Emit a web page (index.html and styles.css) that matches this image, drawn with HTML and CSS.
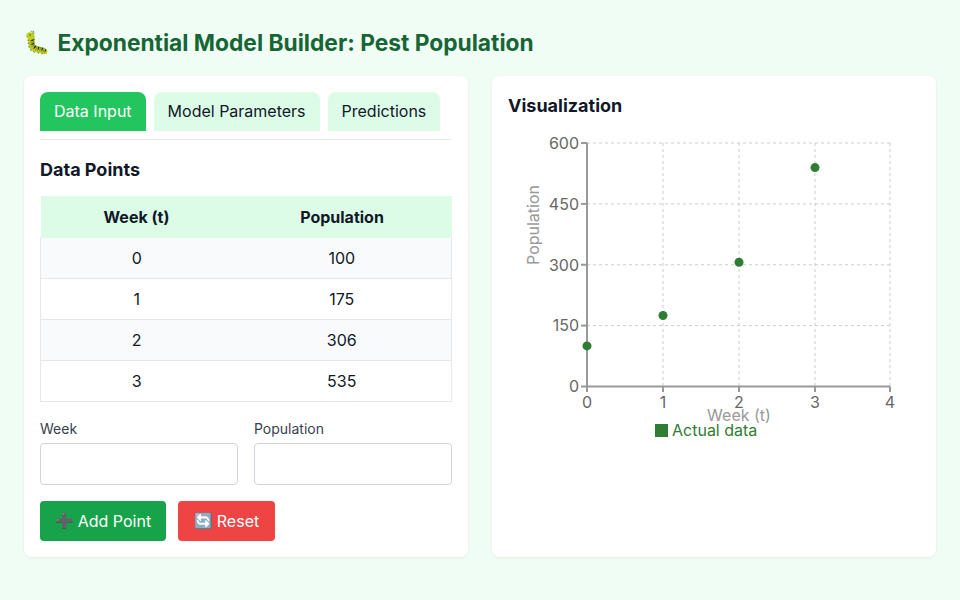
FILE: index.html
```html
<!DOCTYPE html>
<html lang="en">
<head>
<meta charset="utf-8">
<title>Exponential Model Builder</title>
<link rel="stylesheet" href="styles.css">
</head>
<body>
<div class="page">
  <h1 class="title"><span class="emoji">🐛</span> Exponential Model Builder: Pest Population</h1>
  <div class="columns">
    <section class="card">
      <div class="tabs">
        <button class="tab active">Data Input</button>
        <button class="tab">Model Parameters</button>
        <button class="tab">Predictions</button>
      </div>
      <h2 class="section-title">Data Points</h2>
      <table class="data">
        <thead>
          <tr><th class="c1">Week (t)</th><th>Population</th></tr>
        </thead>
        <tbody>
          <tr><td>0</td><td>100</td></tr>
          <tr><td>1</td><td>175</td></tr>
          <tr><td>2</td><td>306</td></tr>
          <tr><td>3</td><td>535</td></tr>
        </tbody>
      </table>
      <div class="fields">
        <label class="field"><span class="label">Week</span><input class="input" type="text"></label>
        <label class="field"><span class="label">Population</span><input class="input" type="text"></label>
      </div>
      <div class="actions">
        <button class="btn btn-add"><span class="emoji">➕</span> Add Point</button>
        <button class="btn btn-reset"><span class="emoji">🔄</span> Reset</button>
      </div>
    </section>
    <section class="card">
      <h2 class="viz-title">Visualization</h2>
      <svg class="chart" width="412" height="320" viewBox="0 0 412 320">
        <g class="grid">
          <line x1="79" y1="18" x2="382" y2="18"/>
          <line x1="79" y1="78.9" x2="382" y2="78.9"/>
          <line x1="79" y1="139.75" x2="382" y2="139.75"/>
          <line x1="79" y1="200.6" x2="382" y2="200.6"/>
          <line x1="155" y1="18" x2="155" y2="261.5"/>
          <line x1="231" y1="18" x2="231" y2="261.5"/>
          <line x1="307" y1="18" x2="307" y2="261.5"/>
          <line x1="382" y1="18" x2="382" y2="261.5"/>
        </g>
        <g class="axis">
          <line x1="79" y1="18" x2="79" y2="261.5"/>
          <line x1="79" y1="261.5" x2="382" y2="261.5"/>
          <line x1="73" y1="18" x2="79" y2="18"/>
          <line x1="73" y1="78.9" x2="79" y2="78.9"/>
          <line x1="73" y1="139.75" x2="79" y2="139.75"/>
          <line x1="73" y1="200.6" x2="79" y2="200.6"/>
          <line x1="73" y1="261.5" x2="79" y2="261.5"/>
          <line x1="79" y1="261.5" x2="79" y2="267"/>
          <line x1="155" y1="261.5" x2="155" y2="267"/>
          <line x1="231" y1="261.5" x2="231" y2="267"/>
          <line x1="307" y1="261.5" x2="307" y2="267"/>
          <line x1="382" y1="261.5" x2="382" y2="267"/>
        </g>
        <g class="ytick">
          <text x="71" y="18" dy="0.36em">600</text>
          <text x="71" y="78.9" dy="0.36em">450</text>
          <text x="71" y="139.75" dy="0.36em">300</text>
          <text x="71" y="200.6" dy="0.36em">150</text>
          <text x="71" y="261.5" dy="0.36em">0</text>
        </g>
        <g class="xtick">
          <text x="79" y="283">0</text>
          <text x="155" y="283">1</text>
          <text x="231" y="283">2</text>
          <text x="307" y="283">3</text>
          <text x="382" y="283">4</text>
        </g>
        <text class="axis-label" x="231" y="296" text-anchor="middle">Week (t)</text>
        <text class="axis-label" transform="translate(31 100) rotate(-90)" text-anchor="middle">Population</text>
        <g class="points">
          <circle cx="79" cy="220.9" r="4.5"/>
          <circle cx="155" cy="190.5" r="4.5"/>
          <circle cx="231" cy="137.3" r="4.5"/>
          <circle cx="307" cy="42.6" r="4.5"/>
        </g>
        <rect class="legend-swatch" x="147" y="299" width="13" height="13"/>
        <text class="legend-text" x="164" y="311">Actual data</text>
      </svg>
    </section>
  </div>
</div>
</body>
</html>
```

FILE: styles.css
```css
* { box-sizing: border-box; }
html, body { margin: 0; padding: 0; }
body {
  background: #f0fdf4;
  font-family: Inter, "Noto Sans", "Noto Color Emoji", sans-serif;
  color: #111827;
  width: 960px;
  height: 600px;
  overflow: hidden;
}
.emoji { font-family: "Noto Color Emoji", "Apple Color Emoji", "Segoe UI Emoji", sans-serif; }
.page { padding: 24px; }
.title {
  margin: 5px 0 19px;
  font-size: 22.75px;
  line-height: 28px;
  font-weight: 700;
  color: #166534;
  display: flex;
  align-items: center;
  gap: 7px;
  white-space: nowrap;
}
.title .emoji { font-size: 22px; margin-left: -1px; }
.columns {
  display: grid;
  grid-template-columns: 444px 444px;
  gap: 24px;
}
.card {
  background: #fff;
  border-radius: 8px;
  padding: 16px;
  box-shadow: 0 1px 3px rgba(0, 0, 0, 0.06);
  height: 481px;
  min-width: 0;
}
.tabs {
  display: flex;
  gap: 8px;
  padding-bottom: 8px;
  border-bottom: 1px solid #e5e7eb;
}
.tab {
  flex: none;
  white-space: nowrap;
  font-family: inherit;
  font-size: 16px;
  line-height: 19px;
  padding: 10px 14px;
  border: 0;
  border-radius: 8px 8px 0 0;
  background: #dcfce7;
  color: #111827;
}
.tab.active { background: #22c55e; color: #fff; }
.section-title {
  margin: 19px 0 15px;
  font-size: 18px;
  line-height: 22px;
  font-weight: 700;
}
.data {
  width: 412px;
  border-collapse: collapse;
  font-size: 16px;
}
.data th, .data td {
  border-top: 1px solid #e5e7eb;
  border-bottom: 1px solid #e5e7eb;
  padding: 10px;
  line-height: 20px;
  text-align: center;
}
.data td:first-child { border-left: 1px solid #e5e7eb; }
.data td:last-child { border-right: 1px solid #e5e7eb; }
.data th { background: #dcfce7; font-weight: 700; border-color: #dcfce7; }
.data .c1 { width: 192px; }
.data tbody tr:nth-child(odd) td { background: #f9fafb; }
.fields {
  display: grid;
  grid-template-columns: minmax(0, 1fr) minmax(0, 1fr);
  gap: 16px;
  margin-top: 18px;
}
.field { display: flex; flex-direction: column; gap: 6px; min-width: 0; }
.label { font-size: 14px; line-height: 17px; color: #374151; }
.input {
  width: 100%;
  min-width: 0;
  height: 42px;
  border: 1px solid #d1d5db;
  border-radius: 4px;
  font-family: inherit;
  font-size: 16px;
  padding: 8px;
}
.actions { display: flex; gap: 12px; margin-top: 16px; }
.btn {
  font-family: inherit;
  font-size: 16px;
  line-height: 20px;
  height: 40px;
  padding: 0 15px;
  border: 0;
  border-radius: 4px;
  color: #fff;
  display: flex;
  align-items: center;
  gap: 4px;
  white-space: nowrap;
}
.btn .emoji { font-size: 15px; }
.btn-add { background: #16a34a; }
.btn-reset { background: #ef4444; padding: 0 16px; }
.viz-title {
  margin: 3px 0 8px;
  font-size: 18px;
  line-height: 22px;
  font-weight: 700;
}
.chart { display: block; font-family: Inter, sans-serif; }
.grid line { stroke: #ccc; stroke-width: 1; stroke-dasharray: 3 3; }
.axis line { stroke: #999; stroke-width: 2; }
.ytick text { fill: #666; font-size: 16px; text-anchor: end; }
.xtick text { fill: #666; font-size: 16px; text-anchor: middle; }
.axis-label { fill: #999; font-size: 16px; }
.points circle { fill: #2e7d32; }
.legend-swatch { fill: #2e7d32; }
.legend-text { fill: #2e7d32; font-size: 16px; }
```
